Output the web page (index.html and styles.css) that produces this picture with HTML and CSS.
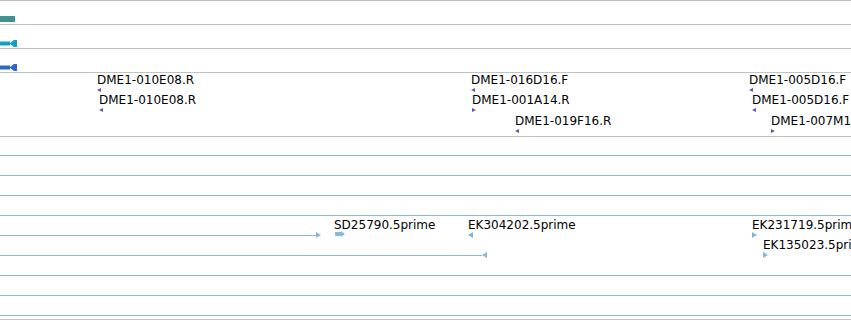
FILE: index.html
```html
<!DOCTYPE html>
<html lang="en">
<head>
  <meta charset="UTF-8" />
  <meta name="viewport" content="width=device-width, initial-scale=1.0">
  <title>Track view</title>
  <link rel="stylesheet" href="styles.css">
</head>
<body>
  <div class="browser">
    <!-- gene model tracks -->
    <div class="track track-small">
      <div class="glyph-bar"></div>
    </div>
    <div class="track track-small">
      <svg class="gene-glyph cyan" width="17" height="7" viewBox="0 0 17 7">
        <rect x="0" y="1.5" width="10" height="4" />
        <polygon points="9.5,3.5 14,0 14,7" />
        <rect x="14" y="0" width="3" height="7" />
      </svg>
    </div>
    <div class="track track-small">
      <svg class="gene-glyph blue" width="17" height="7" viewBox="0 0 17 7">
        <rect x="0" y="1.5" width="10" height="4" />
        <polygon points="9.5,3.5 14,0 14,7" />
        <rect x="14" y="0" width="3" height="7" />
      </svg>
    </div>

    <!-- clone ends -->
    <div class="track track-labels" id="cloneTrack"></div>

    <!-- ESTs -->
    <div class="track track-est" id="estTrack"></div>
  </div>

  <script>
    // clone end reads, row = layout row
    const clones = [
      { name: 'DME1-010E08.R', x: 97, top: 0, strand: -1 },
      { name: 'DME1-010E08.R', x: 99, top: 20, strand: -1 },
      { name: 'DME1-016D16.F', x: 471, top: 0, strand: -1 },
      { name: 'DME1-001A14.R', x: 472, top: 20, strand: 1 },
      { name: 'DME1-019F16.R', x: 515, top: 41, strand: -1 },
      { name: 'DME1-005D16.F', x: 749, top: 0, strand: -1 },
      { name: 'DME1-005D16.F', x: 752, top: 20, strand: -1 },
      { name: 'DME1-007M13.R', x: 771, top: 41, strand: 1 }
    ];

    // long ESTs running through the whole view
    const estLines = [18, 38, 58, 78, 138, 158, 178];
    const estPartial = [
      { top: 98, end: 321, strand: 1 },
      { top: 118, end: 487, strand: -1 }
    ];
    const ests = [
      { name: 'SD25790.5prime', x: 334, top: 81, box: true },
      { name: 'EK304202.5prime', x: 468, top: 81, strand: -1 },
      { name: 'EK231719.5prime', x: 752, top: 81, strand: 1 },
      { name: 'EK135023.5prime', x: 763, top: 101, strand: 1 }
    ];

    function addLabel(track, f) {
      const label = document.createElement('div');
      label.className = 'feature-label';
      label.textContent = f.name;
      label.style.left = f.x + 'px';
      label.style.top = f.top + 'px';
      track.appendChild(label);
    }

    function addMarker(track, x, top, strand) {
      const m = document.createElement('div');
      m.className = 'marker ' + (strand < 0 ? 'minus' : 'plus');
      m.style.left = x + 'px';
      m.style.top = top + 'px';
      track.appendChild(m);
    }

    const cloneTrack = document.getElementById('cloneTrack');
    clones.forEach(f => {
      addLabel(cloneTrack, f);
      addMarker(cloneTrack, f.x, f.top + 15, f.strand);
    });

    const estTrack = document.getElementById('estTrack');
    estLines.forEach(top => {
      const line = document.createElement('div');
      line.className = 'est-line';
      line.style.top = top + 'px';
      line.style.width = '100%';
      estTrack.appendChild(line);
    });

    estPartial.forEach(p => {
      const line = document.createElement('div');
      line.className = 'est-line';
      line.style.top = p.top + 'px';
      line.style.width = (p.end - 5) + 'px';
      estTrack.appendChild(line);
      addMarker(estTrack, p.end - 5, p.top - 3, p.strand);
    });

    ests.forEach(f => {
      addLabel(estTrack, f);
      if (f.box) {
        const b = document.createElement('div');
        b.className = 'est-box';
        b.style.left = (f.x + 1) + 'px';
        b.style.top = (f.top + 14) + 'px';
        estTrack.appendChild(b);
      } else {
        addMarker(estTrack, f.x, f.top + 14, f.strand);
      }
    });
  </script>
</body>
</html>
```

FILE: styles.css
```css
body {
  margin: 0;
  font-family: 'DejaVu Sans', sans-serif;
  font-size: 12px;
  color: #000;
  background: #fff;
  overflow: hidden;
}
.browser {
  width: 851px;
  border-top: 1px solid #c2c2c2;
}
.track {
  position: relative;
  border-bottom: 1px solid #c2c2c2;
  overflow: hidden;
}
.track-small {
  height: 23px;
}
.track-labels {
  height: 63px;
}
.track-est {
  height: 182px;
}
.glyph-bar {
  position: absolute;
  left: 0;
  top: 15px;
  width: 15px;
  height: 6px;
  background: #3f9491;
}
.gene-glyph {
  position: absolute;
  left: 0;
  top: 15px;
}
.gene-glyph.cyan {
  fill: #0fa0c4;
}
.gene-glyph.blue {
  fill: #2c68c9;
}
.feature-label {
  position: absolute;
  line-height: 14px;
  white-space: nowrap;
}
.marker {
  position: absolute;
  width: 0;
  height: 0;
  border-top: 2px solid transparent;
  border-bottom: 2px solid transparent;
}
.marker.minus {
  border-right: 4px solid #6b51ab;
}
.marker.plus {
  border-left: 4px solid #6b51ab;
}
.track-est .marker {
  border-top-width: 3px;
  border-bottom-width: 3px;
}
.track-est .marker.minus {
  border-right: 5px solid #86b6dd;
}
.track-est .marker.plus {
  border-left: 5px solid #86b6dd;
}
.est-line {
  position: absolute;
  left: 0;
  height: 1px;
  background: #8ab8dc;
}
.est-box {
  position: absolute;
  width: 6px;
  height: 4px;
  background: #8ab8dc;
}
.est-box::after {
  content: '';
  position: absolute;
  left: 6px;
  top: -1px;
  border-left: 4px solid #8ab8dc;
  border-top: 3px solid transparent;
  border-bottom: 3px solid transparent;
}
```
